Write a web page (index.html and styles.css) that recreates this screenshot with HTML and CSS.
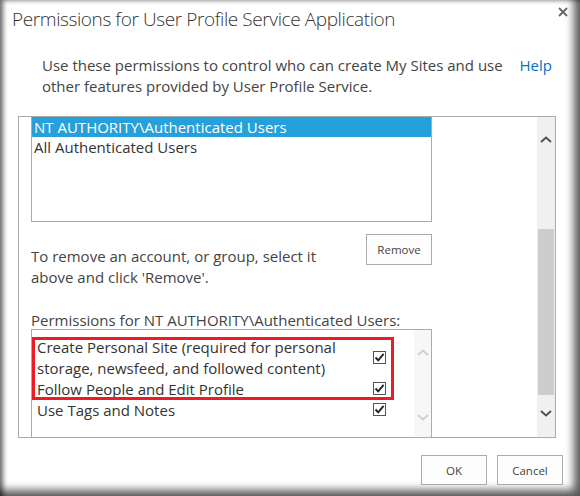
FILE: index.html
```html
<!DOCTYPE html>
<html lang="en">
<head>
<meta charset="utf-8">
<title>Permissions for User Profile Service Application</title>
<link rel="stylesheet" href="styles.css">
</head>
<body>
<div class="dialog">
  <header class="titlebar">
    <h1 class="title">Permissions for User Profile Service Application</h1>
    <button class="close" aria-label="Close">
      <svg width="10" height="10" viewBox="0 0 10 10"><path d="M1 1L9 9M9 1L1 9" stroke="#666" stroke-width="1.8" fill="none"/></svg>
    </button>
  </header>

  <div class="intro">
    <p class="intro-text">Use these permissions to control who can create My Sites and use other features provided by User Profile Service.</p>
    <a class="help" href="#">Help</a>
  </div>

  <div class="panel">
    <div class="panel-content">
      <ul class="accounts">
        <li class="account selected">NT AUTHORITY\Authenticated Users</li>
        <li class="account">All Authenticated Users</li>
      </ul>

      <div class="remove-row">
        <p class="remove-text">To remove an account, or group, select it above and click 'Remove'.</p>
        <button class="btn btn-remove">Remove</button>
      </div>

      <div class="perm-label">Permissions for NT AUTHORITY\Authenticated Users:</div>

      <div class="perms">
        <ul class="perm-list">
          <li class="perm"><span class="perm-name">Create Personal Site (required for personal storage, newsfeed, and followed content)</span><span class="check"><svg width="11" height="11" viewBox="0 0 11 11"><path d="M1.5 5.5L4.2 8.3L9.6 1.8" stroke="#222" stroke-width="1.9" fill="none"/></svg></span></li>
          <li class="perm"><span class="perm-name">Follow People and Edit Profile</span><span class="check"><svg width="11" height="11" viewBox="0 0 11 11"><path d="M1.5 5.5L4.2 8.3L9.6 1.8" stroke="#222" stroke-width="1.9" fill="none"/></svg></span></li>
          <li class="perm"><span class="perm-name">Use Tags and Notes</span><span class="check"><svg width="11" height="11" viewBox="0 0 11 11"><path d="M1.5 5.5L4.2 8.3L9.6 1.8" stroke="#222" stroke-width="1.9" fill="none"/></svg></span></li>
          <li class="highlight" aria-hidden="true"></li>
        </ul>
        <div class="mini-scroll">
          <span class="arrow up"><svg width="12" height="7" viewBox="0 0 12 7"><path d="M1 6L6 1.5L11 6" stroke="#cfcfcf" stroke-width="1.8" fill="none"/></svg></span>
          <span class="arrow down"><svg width="12" height="7" viewBox="0 0 12 7"><path d="M1 1L6 5.5L11 1" stroke="#cfcfcf" stroke-width="1.8" fill="none"/></svg></span>
        </div>
      </div>
    </div>

    <div class="scrollbar">
      <span class="sb-btn sb-up"><svg width="12" height="7" viewBox="0 0 12 7"><path d="M1 6L6 1.5L11 6" stroke="#505050" stroke-width="2" fill="none"/></svg></span>
      <span class="sb-thumb"></span>
      <span class="sb-btn sb-down"><svg width="12" height="7" viewBox="0 0 12 7"><path d="M1 1L6 5.5L11 1" stroke="#505050" stroke-width="2" fill="none"/></svg></span>
    </div>
  </div>

  <footer class="footer">
    <button class="btn">OK</button>
    <button class="btn">Cancel</button>
  </footer>
</div>
</body>
</html>
```

FILE: styles.css
```css
* { box-sizing: border-box; }

html, body {
  margin: 0;
  padding: 0;
  background: #fff;
}

body {
  font-family: "Open Sans", "Noto Sans", sans-serif;
  color: #444;
}

.dialog {
  width: 580px;
  height: 496px;
  padding: 0 12px;
  display: flex;
  flex-direction: column;
  background: #fff;
  box-shadow: inset 5px 2px 5px -2px rgba(0, 0, 0, 0.6),
              inset -9px -9px 8px -3px rgba(0, 0, 0, 0.65);
}

.titlebar {
  height: 40px;
  display: flex;
  justify-content: space-between;
  align-items: flex-start;
}

.title {
  margin: 0;
  padding-top: 6px;
  font-size: 19px;
  font-weight: 300;
  line-height: 26px;
  letter-spacing: -0.4px;
  color: #333;
}

.close {
  margin: 7px 0 0;
  padding: 0;
  border: 0;
  background: none;
  width: 10px;
  height: 10px;
  display: flex;
}

.intro {
  margin: 15px 16px 0 30px;
  display: flex;
  justify-content: space-between;
  align-items: flex-start;
  font-size: 15px;
  line-height: 21px;
  height: 42px;
}

.intro-text {
  margin: 0;
  width: 470px;
  color: #444;
}

.help {
  color: #0072c6;
  text-decoration: none;
}

.panel {
  margin: 19px 12px 0 6px;
  height: 322px;
  border: 1px solid #ababab;
  display: flex;
  overflow: hidden;
}

.panel-content {
  flex: 1;
  padding-left: 12px;
  overflow: hidden;
  font-size: 15px;
}

.accounts {
  list-style: none;
  margin: 0;
  padding: 0;
  width: 401px;
  height: 105px;
  border: 1px solid #ababab;
  border-top: 0;
  color: #333;
}

.account {
  height: 20px;
  line-height: 20px;
  padding-left: 2px;
}

.account.selected {
  background: #26a0da;
  color: #fff;
}

.remove-row {
  width: 401px;
  margin-top: 12px;
  display: flex;
  justify-content: space-between;
  align-items: flex-start;
}

.remove-text {
  margin: 12px 0 0;
  width: 310px;
  line-height: 21px;
  color: #444;
}

.btn {
  width: 66px;
  height: 30px;
  padding: 0;
  border: 1px solid #ababab;
  background: #fdfdfd;
  font-family: "Open Sans", "Noto Sans", sans-serif;
  font-size: 11.5px;
  color: #444;
}

.btn-remove {
  height: 31px;
}

.perm-label {
  margin-top: 23px;
  line-height: 18px;
  color: #444;
}

.perms {
  width: 401px;
  height: 120px;
  border: 1px solid #ababab;
  border-bottom: 0;
  display: flex;
}

.perm-list {
  list-style: none;
  margin: 0;
  padding: 7px 0 0 5px;
  flex: 1;
  position: relative;
  color: #333;
}

.perm {
  display: grid;
  grid-template-columns: 336px 13px;
  align-items: center;
  line-height: 21px;
}

.check {
  width: 13px;
  height: 13px;
  border: 1px solid #555;
  background: #fff;
  display: flex;
  align-items: center;
  justify-content: center;
  margin-top: -2px;
}

.highlight {
  position: absolute;
  left: 0;
  top: 7px;
  width: 362px;
  height: 63px;
  border: 3px solid #ed1c24;
}

.mini-scroll {
  width: 17px;
  background: #f7f7f7;
  display: flex;
  flex-direction: column;
  align-items: center;
}

.arrow {
  display: flex;
}

.arrow.up { margin-top: 19px; }
.arrow.down { margin-top: 58px; }

.scrollbar {
  width: 18px;
  background: #f0f0f0;
  display: flex;
  flex-direction: column;
  align-items: center;
}

.sb-btn {
  display: flex;
  align-items: center;
  justify-content: center;
  width: 18px;
}

.sb-up { height: 44px; }

.sb-thumb {
  margin-top: 68px;
  width: 16px;
  height: 166px;
  background: #cdcdcd;
}

.sb-down { height: 36px; }

.footer {
  margin: 17px 5px 0 0;
  display: flex;
  justify-content: flex-end;
  gap: 10px;
}
```
